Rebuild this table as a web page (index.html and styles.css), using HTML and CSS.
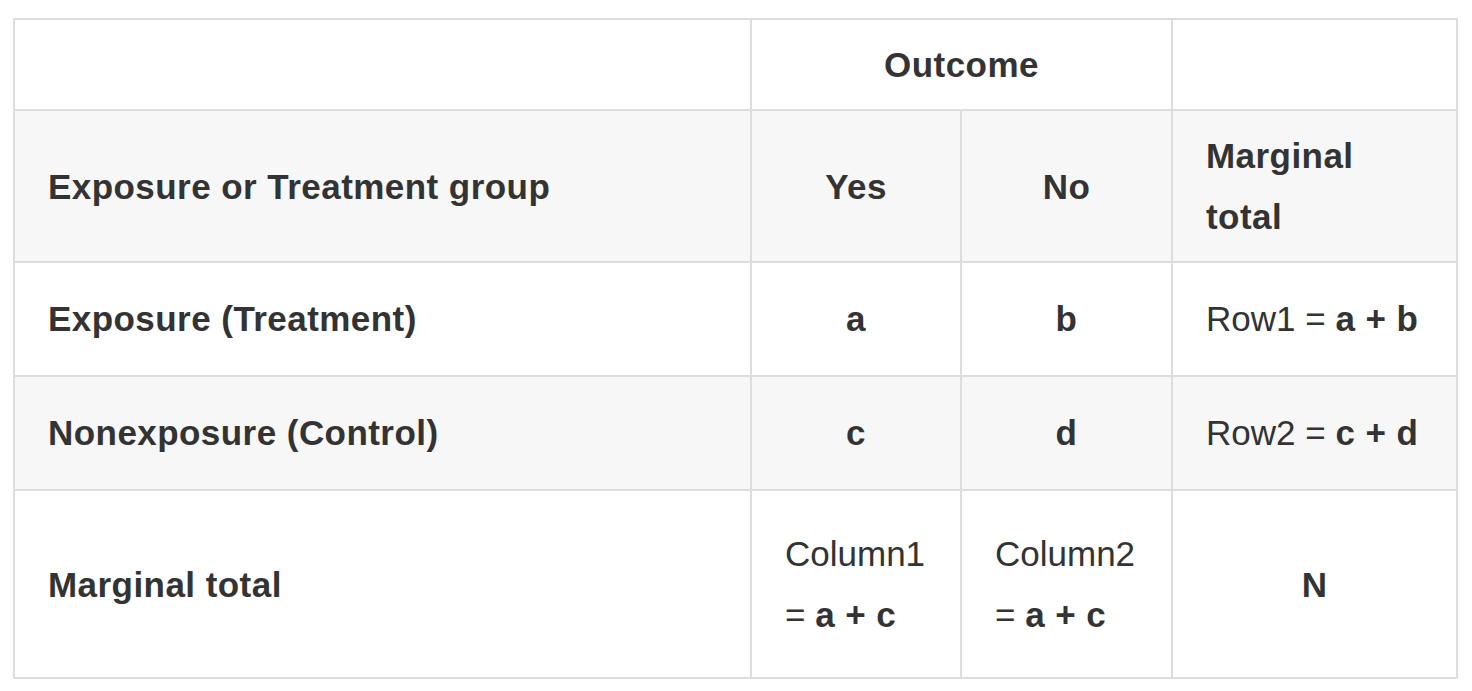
FILE: index.html
```html
<!DOCTYPE html>
<html>
<head>
<meta charset="utf-8">
<link rel="stylesheet" href="styles.css">
</head>
<body>
<table class="ct">
  <colgroup>
    <col class="c1">
    <col class="c2">
    <col class="c3">
    <col class="c4">
  </colgroup>
  <thead>
    <tr class="h1">
      <th></th>
      <th class="center" colspan="2">Outcome</th>
      <th></th>
    </tr>
    <tr class="h2 stripe">
      <th>Exposure or Treatment group</th>
      <th class="center">Yes</th>
      <th class="center">No</th>
      <th>Marginal total</th>
    </tr>
  </thead>
  <tbody>
    <tr>
      <td><strong>Exposure (Treatment)</strong></td>
      <td class="center"><strong>a</strong></td>
      <td class="center"><strong>b</strong></td>
      <td>Row1 = <strong>a + b</strong></td>
    </tr>
    <tr class="stripe">
      <td><strong>Nonexposure (Control)</strong></td>
      <td class="center"><strong>c</strong></td>
      <td class="center"><strong>d</strong></td>
      <td>Row2 = <strong>c + d</strong></td>
    </tr>
    <tr class="last">
      <td><strong>Marginal total</strong></td>
      <td>Column1 = <strong>a + c</strong></td>
      <td>Column2 = <strong>a + c</strong></td>
      <td class="center"><strong>N</strong></td>
    </tr>
  </tbody>
</table>
</body>
</html>
```
FILE: styles.css
```css
html, body {
  margin: 0;
  padding: 0;
  background: #ffffff;
}

body {
  font-family: "Liberation Sans", Arial, sans-serif;
  color: #333333;
  font-size: 35px;
  line-height: 61px;
}

.ct {
  border-collapse: collapse;
  table-layout: fixed;
  width: 1445px;
  margin: 18px 0 0 13px;
}

.c1 { width: 737px; }
.c2 { width: 210px; }
.c3 { width: 211px; }
.c4 { width: 285px; }

.ct th,
.ct td {
  border: 2px solid #dddddd;
  padding: 14px 33px;
  text-align: left;
  vertical-align: middle;
  font-weight: normal;
}

.ct th {
  font-weight: bold;
  letter-spacing: 0.45px;
}

.ct td {
  padding: 25px 33px 26px;
}

.ct tr.last td {
  padding: 32px 33px;
}

.ct .center {
  text-align: center;
}

.stripe {
  background: #f7f7f7;
}

strong {
  font-weight: bold;
  letter-spacing: 0.45px;
}
```
